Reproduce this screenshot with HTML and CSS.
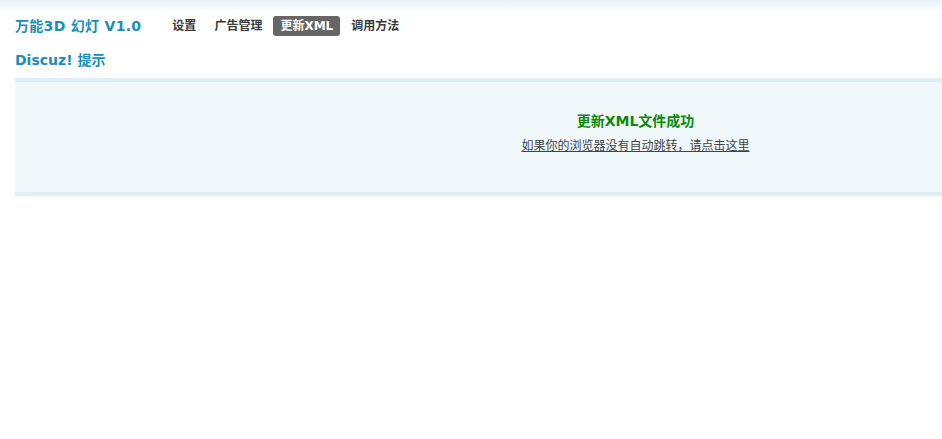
FILE: index.html
```html
<!DOCTYPE html>
<html lang="zh-CN">
    <head>
        <meta http-equiv="content-type" content="text/html; charset=utf-8" />
        <title>万能3D 幻灯 V1.0</title>
        <link rel="stylesheet" href="styles.css">
    </head>
    <body>
        <div class="itemtitle">
            <h3 class="pluginTitle">万能3D 幻灯 V1.0</h3>
            <ul class="tab1">
                <li><a href="#">设置</a></li>
                <li><a href="#">广告管理</a></li>
                <li class="current"><a href="#">更新XML</a></li>
                <li><a href="#">调用方法</a></li>
            </ul>
        </div>
        <h3 class="infoTitle">Discuz! 提示</h3>
        <div class="infobox">
            <h4 class="infotitle2">更新XML文件成功</h4>
            <p class="marginbot"><a class="lightlink" href="#">如果你的浏览器没有自动跳转，请点击这里</a></p>
        </div>
    </body>
</html>
```

FILE: styles.css
```css
* {
    font-family: 'DejaVu Sans', 'Noto Sans CJK SC', sans-serif;
}

body {
    margin: 0;
    padding: 0 0 0 15px;
    background: #ffffff linear-gradient(#e6f0f8, #ffffff 12px) no-repeat;
    color: #333;
    font-size: 12px;
}

.itemtitle {
    display: flex;
    align-items: center;
    padding-top: 16px;
    height: 20px;
}

.pluginTitle {
    margin: 0 24px 0 0;
    font-size: 14px;
    font-weight: bold;
    color: #1a8dbb;
    line-height: 20px;
    letter-spacing: 0.3px;
}

.tab1 {
    display: flex;
    gap: 4px;
    margin: 0;
    padding: 0;
    list-style: none;
}

.tab1 a {
    display: block;
    padding: 0 7px;
    line-height: 20px;
    font-weight: bold;
    color: #3a3a3a;
    text-decoration: none;
    border-radius: 3px;
}

.tab1 .current a {
    background: #666;
    color: #fff;
}

.infoTitle {
    margin: 0;
    padding-top: 15px;
    font-size: 14px;
    font-weight: bold;
    color: #1a8dbb;
    line-height: 18px;
}

.infobox {
    margin-top: 9px;
    padding: 30px 0 37px 314px;
    border-top: 4px solid #deeef9;
    border-bottom: 4px solid #deeef9;
    background: #f1f8fc;
    text-align: center;
}

.infotitle2 {
    margin: 0 0 7px;
    font-size: 14px;
    font-weight: bold;
    color: #098a09;
    line-height: 18px;
}

.marginbot {
    margin: 0;
    line-height: 18px;
}

.lightlink {
    color: #444;
    text-decoration: underline;
}
```
